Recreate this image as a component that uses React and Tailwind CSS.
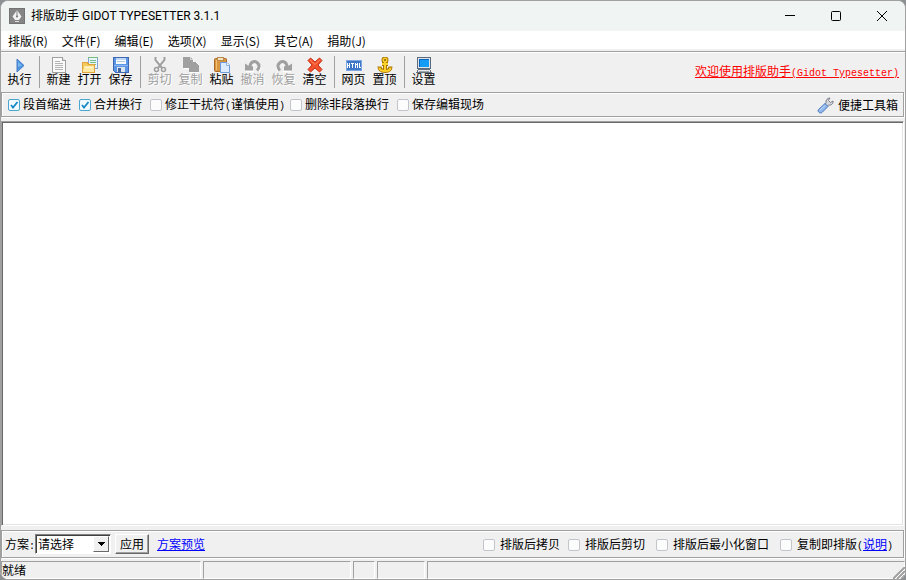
import React, { useState } from "react";

const MENUS = ["排版(R)", "文件(F)", "编辑(E)", "选项(X)", "显示(S)", "其它(A)", "捐助(J)"];

const PlayIcon = () => (
  <svg width="16" height="16" viewBox="0 0 16 16">
    <path d="M5 2L12 8.500L5 15Z" fill="#4a94e0" stroke="#4a7cc8" />
    <path d="M6 5L10 8.500L6 10Z" fill="#7ab8f2" />
  </svg>
);

const NewIcon = () => (
  <svg width="16" height="16" viewBox="0 0 16 16" shapeRendering="crispEdges">
    <path d="M1.500 0.500H11.500L14.500 3.500V15.500H1.500Z" fill="#fafafa" stroke="#a0a0a0" />
    <path d="M11.500 0.500V3.500H14.500" fill="#ddd" stroke="#a0a0a0" />
    <path d="M4 4.500H9M4 6.500H12M4 8.500H12M4 10.500H12M4 12.500H12" stroke="#b4b4b4" />
  </svg>
);

const OpenIcon = () => (
  <svg width="16" height="16" viewBox="0 0 16 16" shapeRendering="crispEdges">
    <path d="M6.500 0.500H15.500V11.500H6.500Z" fill="#e9f5fc" stroke="#7fa6d4" />
    <path d="M6 0.500H16" stroke="#73bd78" />
    <path d="M8 3.500H14M8 5.500H14M11 7.500H14" stroke="#75c08a" />
    <path d="M0.500 5.500H5.500L6.500 7.500H12.500V15.500H0.500Z" fill="#f4c95f" stroke="#dfa53c" />
    <path d="M2 9H12V15H1V12H2Z" fill="#ffe9a2" />
    <path d="M3 10.500H11" stroke="#fff7d5" />
  </svg>
);

const SaveIcon = () => (
  <svg width="16" height="16" viewBox="0 0 16 16" shapeRendering="crispEdges">
    <path d="M0.500 0.500H15.500V15.500H2.500L0.500 13.500Z" fill="#5b96e6" stroke="#3f66b3" />
    <path d="M3 1H13V7H3Z" fill="#f5faff" />
    <path d="M3 1H13V3H3Z" fill="#bfd8f7" />
    <path d="M4 4.500H12" stroke="#b9c9dd" />
    <path d="M1 8.500H15" stroke="#87b6f2" />
    <path d="M4 10H12V15H4Z" fill="#dce4ee" />
    <path d="M5 11H8V15H5Z" fill="#40649f" />
  </svg>
);

const CutIcon = () => (
  <svg width="16" height="16" viewBox="0 0 16 16" fill="none">
    <path d="M4.500 2L11 12M13.500 2L7 12" stroke="#fff" strokeWidth="2" />
    <g stroke="#9f9f9f">
      <path d="M3.500 0V3L10 11M12.500 0V3L6 11" strokeWidth="2" />
      <circle cx="4.500" cy="12.500" r="2" strokeWidth="1.500" />
      <circle cx="11.500" cy="12.500" r="2" strokeWidth="1.500" />
    </g>
  </svg>
);

const CopyIcon = () => (
  <svg width="16" height="16" viewBox="0 0 16 16" shapeRendering="crispEdges">
    <path d="M1 1H8L11 4V5H13L16 8V16H7V12H1Z" fill="#fff" />
    <path d="M0 0H7L10 3V11H0Z" fill="#a0a0a0" />
    <path d="M6 5H12L16 8V15H6Z" fill="#a0a0a0" />
    <path d="M7.500 0V2.500H10" fill="none" stroke="#d4d4d4" />
  </svg>
);

const PasteIcon = () => (
  <svg width="16" height="16" viewBox="0 0 16 16">
    <rect x="0.500" y="1.500" width="12" height="13" rx="1" fill="#d9953f" stroke="#a9692a" />
    <path d="M2.500 3V13" stroke="#f1bf72" />
    <rect x="3.500" y="0.500" width="6" height="3" fill="#f3e3c0" stroke="#b98a4c" />
    <path d="M6.500 5.500H13L15.500 8V15.500H6.500Z" fill="#dcecfc" stroke="#6d9ad9" />
    <path d="M12.500 5.500V8.500H15.500" fill="#fff" stroke="#8db4e6" />
  </svg>
);

// one arrow serves both undo and redo
const TurnIcon = ({ flip }) => (
  <svg width="16" height="16" viewBox="0 0 16 16" className={flip ? "-scale-x-100" : ""}>
    <path d="M1 14.500H9M14 14L16 9" fill="none" stroke="#fff" strokeWidth="1.500" />
    <path d="M5 10C5 5 9 3.500 12 5.500C15 8 14.500 11 12 13.500" fill="none" stroke="#a0a0a0" strokeWidth="3" />
    <path d="M0 6.500L3 8.500L8 9.500V13.500H0Z" fill="#a0a0a0" />
    <path d="M8 8.500L10.500 7.500" stroke="#fff" />
  </svg>
);

const ClearIcon = () => (
  <svg width="16" height="16" viewBox="0 0 16 16">
    <path
      d="M1 3.500L3.500 1L8 5L12.500 1L15 3.500L11 8L15 12.500L12.500 15L8 11L3.500 15L1 12.500L5 8Z"
      fill="#f2522d"
      stroke="#c32f17"
    />
    <path d="M3 3L8 7.500L12.500 3" fill="none" stroke="#ff8a63" />
  </svg>
);

const WebIcon = () => (
  <svg width="16" height="16" viewBox="0 0 16 16" shapeRendering="crispEdges">
    <rect x="0" y="3" width="16" height="11" fill="#7ba6e2" />
    <rect x="1" y="4" width="14" height="9" fill="#3f76c8" />
    <path
      d="M1 6h1v2h1v-2h1v5h-1v-2h-1v2h-1zM5 6h3v1h-1v4h-1v-4h-1zM9 6h1v1h1v-1h1v5h-1v-3h-1v3h-1zM13 6h1v4h1v1h-2z"
      fill="#fff"
    />
  </svg>
);

const AnchorIcon = () => (
  <svg width="16" height="16" viewBox="0 0 16 16" fill="none">
    <g stroke="#a87400" strokeWidth="4">
      <circle cx="8" cy="3" r="1.500" />
      <path d="M8 5V14M5 7H11M2.500 9.500C2.500 13 5 14 8 14C11 14 13.500 13 13.500 9.500" />
    </g>
    <g stroke="#fbd22b" strokeWidth="2">
      <circle cx="8" cy="3" r="1.500" />
      <path d="M8 5V14M5 7H11M2.500 10.500C2.500 13 5 14 8 14C11 14 13.500 13 13.500 10.500" />
    </g>
    <circle cx="8" cy="3" r="1" fill="#8a6210" />
  </svg>
);

const MonitorIcon = () => (
  <svg width="16" height="16" viewBox="0 0 16 16" shapeRendering="crispEdges">
    <rect x="1.500" y="0.500" width="13" height="11" fill="#dfe5ec" stroke="#5c6b7c" />
    <rect x="3" y="2" width="10" height="8" fill="#159cf4" />
    <path d="M3 2H13V3H3ZM3 2H4V10H3Z" fill="#0864b8" />
    <path d="M2.500 12.500H13.500L15.500 15.500H0.500Z" fill="#e4e8ed" stroke="#66717e" />
    <path d="M3 14H13" stroke="#9da6b1" />
  </svg>
);

const WrenchIcon = () => (
  <svg width="17" height="17" viewBox="0 0 17 17">
    <path
      d="M8 7.500L9 6C8.500 3 10.500 1 13 1L11.500 3.500L13.500 5.500L16 4C16.500 7 14 8.500 11.500 8L10 9.500Z"
      fill="#d5d8dc"
      stroke="#777d85"
    />
    <path d="M8 6.500L11 9.500L5 15.500C3 17 0 14.500 1.500 12.500Z" fill="#8db6ee" stroke="#4f78b8" />
    <path d="M3 13L8 8.500" stroke="#c7def9" />
  </svg>
);

const AppIcon = () => (
  <svg width="16" height="16" viewBox="0 0 16 16">
    <rect width="16" height="16" fill="#858585" />
    <rect x="0.500" y="0.500" width="15" height="15" fill="none" stroke="#737373" />
    <path d="M8 2L12.500 8.500L10 12H6L3.500 8.500Z" fill="#f2f2f2" />
    <path d="M8 2V8" stroke="#858585" />
    <circle cx="8" cy="8.500" r="1" fill="#707070" />
    <path d="M6 13.500H10" stroke="#ddd" />
  </svg>
);

const TOOL_GROUPS = [
  [{ label: "执行", icon: <PlayIcon /> }],
  [
    { label: "新建", icon: <NewIcon /> },
    { label: "打开", icon: <OpenIcon /> },
    { label: "保存", icon: <SaveIcon /> },
  ],
  [
    { label: "剪切", icon: <CutIcon />, disabled: true },
    { label: "复制", icon: <CopyIcon />, disabled: true },
    { label: "粘贴", icon: <PasteIcon /> },
    { label: "撤消", icon: <TurnIcon />, disabled: true },
    { label: "恢复", icon: <TurnIcon flip />, disabled: true },
    { label: "清空", icon: <ClearIcon /> },
  ],
  [
    { label: "网页", icon: <WebIcon /> },
    { label: "置顶", icon: <AnchorIcon /> },
  ],
  [{ label: "设置", icon: <MonitorIcon /> }],
];

// narrow latin glyphs, half the width of a chinese character
const Half = ({ children }) => (
  <span className="font-['Liberation_Mono',monospace] text-[10px]">{children}</span>
);

const Check = ({ id, children, defaultChecked, className = "" }) => {
  const [checked, setChecked] = useState(!!defaultChecked);

  return (
    <div className={`flex items-center whitespace-nowrap ${className}`}>
      <span className="grid">
        <input
          id={id}
          type="checkbox"
          checked={checked}
          onChange={(e) => setChecked(e.target.checked)}
          className="col-start-1 row-start-1 size-3 appearance-none rounded-xs border border-[#c3c5cc] bg-[#fcfcfc] checked:border-[#4aa5cf] checked:bg-[#f0faff]"
        />
        {checked && (
          <svg width="12" height="12" viewBox="0 0 12 12" className="pointer-events-none col-start-1 row-start-1">
            <path d="M3 6L5 8.500L9.500 3" fill="none" stroke="#1689c4" strokeWidth="1.800" />
          </svg>
        )}
      </span>
      <label htmlFor={id} className="pt-px">{children}</label>
    </div>
  );
};

const TitleBar = () => (
  <header className="flex h-[30px] shrink-0 items-center bg-[#f0f4f2] pl-2">
    <AppIcon />
    <h1 className="ml-1.5 flex-1 font-['Roboto','Noto_Sans_CJK_SC',sans-serif] text-xs">
      排版助手 GIDOT TYPESETTER 3.1.1
    </h1>
    <button aria-label="最小化" className="flex h-full w-[46px] items-center justify-center">
      <svg width="10" height="10" viewBox="0 0 10 10">
        <path d="M0 4.500H10" stroke="#000" />
      </svg>
    </button>
    <button aria-label="最大化" className="flex h-full w-[46px] items-center justify-center">
      <svg width="10" height="10" viewBox="0 0 10 10">
        <rect x="0.500" y="0.500" width="9" height="9" rx="1" fill="none" stroke="#000" />
      </svg>
    </button>
    <button aria-label="关闭" className="flex h-full w-[46px] items-center justify-center">
      <svg width="10" height="10" viewBox="0 0 10 10">
        <path d="M0 0L10 10M10 0L0 10" stroke="#000" />
      </svg>
    </button>
  </header>
);

const ToolBar = () => (
  <div className="mt-0.5 flex shrink-0 items-center justify-between border-t border-[#a0a0a0] pr-[6px] pl-[3px] shadow-[inset_0_1px_0_#fff]">
    <div className="flex h-10 items-center">
      {TOOL_GROUPS.map((group, i) => (
        <React.Fragment key={i}>
          {i > 0 && <span className="mr-[3px] ml-1 h-8 w-px bg-[#a0a0a0]" />}
          {group.map((tool) => (
            <button
              key={tool.label}
              disabled={tool.disabled}
              className="flex w-[31px] flex-col items-center leading-[14px] whitespace-nowrap disabled:text-[#a0a0a0] disabled:[text-shadow:1px_1px_0_#fff]"
            >
              {tool.icon}
              {tool.label}
            </button>
          ))}
        </React.Fragment>
      ))}
    </div>
    <a href="#welcome" className="pt-0.5 leading-[14px] text-[#ff0000] underline">
      欢迎使用排版助手<Half>(Gidot Typesetter)</Half>
    </a>
  </div>
);

const Panel = ({ children, className = "" }) => (
  <div
    className={`mr-px flex shrink-0 items-center border border-[#a0a0a0] shadow-[inset_1px_1px_0_#fff,1px_1px_0_#fff] ${className}`}
  >
    {children}
  </div>
);

const SchemeBar = () => (
  <Panel className="mt-1 h-7 justify-between pr-[10px] pl-[3px]">
    <div className="flex items-center">
      <label htmlFor="scheme" className="pt-0.5">
        方案<Half>:</Half>
      </label>
      <div className="relative h-5 w-[76px] border border-t-[#808080] border-r-white border-b-white border-l-[#808080] bg-white shadow-[inset_1px_1px_0_#404040]">
        <select id="scheme" className="h-full w-full appearance-none bg-transparent pt-0.5 pl-0.5 outline-none">
          <option>请选择</option>
        </select>
        <span className="pointer-events-none absolute top-px right-px bottom-px flex w-4 items-center justify-center border border-t-white border-r-[#696969] border-b-[#696969] border-l-white bg-[#f0f0f0]">
          <svg width="7" height="4" viewBox="0 0 7 4" shapeRendering="crispEdges">
            <path d="M0 0H7L3.500 4Z" />
          </svg>
        </span>
      </div>
      <button className="ml-1 h-5 w-[34px] border border-t-white border-r-[#696969] border-b-[#696969] border-l-white pt-0.5 shadow-[inset_-1px_-1px_0_#a0a0a0]">
        应用
      </button>
      <a href="#preview" className="ml-2 pt-0.5 text-[#0000ff] underline">
        方案预览
      </a>
    </div>
    <div className="flex items-center gap-2 pt-0.5">
      <Check id="copy-after" className="gap-[5px]">排版后拷贝</Check>
      <Check id="cut-after" className="gap-[5px] pr-[3px]">排版后剪切</Check>
      <Check id="minimize-after" className="gap-[5px] pr-[3px]">排版后最小化窗口</Check>
      <Check id="format-on-copy" className="gap-[5px]">
        复制即排版<Half>(</Half>
        <a href="#help" className="text-[#0000ff] underline">说明</a>
        <Half>)</Half>
      </Check>
    </div>
  </Panel>
);

const Pane = ({ children, className }) => (
  <div className={`border border-t-[#a0a0a0] border-r-white border-b-white border-l-[#a0a0a0] ${className}`}>
    {children}
  </div>
);

const StatusBar = () => (
  <footer className="relative mt-[3px] flex h-[18px] shrink-0 gap-0.5">
    <Pane className="w-[200px] leading-[18px]">就绪</Pane>
    <Pane className="w-[148px]" />
    <Pane className="w-[22px]" />
    <Pane className="w-12" />
    <Pane className="flex-1" />
    <svg width="12" height="12" viewBox="0 0 12 12" className="absolute right-0 bottom-0">
      <path d="M0 12L12 0M4 12L12 4M8 12L12 8" stroke="#a0a0a0" strokeWidth="2" />
      <path d="M2 12L12 2M6 12L12 6" stroke="#fff" />
    </svg>
  </footer>
);

export default function App() {
  const [text, setText] = useState("");

  return (
    <div className="h-screen bg-[#8c9093] font-['Liberation_Sans','Noto_Sans_CJK_SC',sans-serif] text-xs text-black">
      <div className="flex h-full flex-col overflow-hidden rounded-lg border border-[#a0a0a0] bg-[#f0f0f0]">
        <TitleBar />

        <nav className="flex h-[18px] shrink-0 items-center gap-[14px] bg-white pl-[7px] font-['Noto_Sans_CJK_SC',sans-serif]">
          {MENUS.map((menu) => (
            <button key={menu} className="pt-0.5 leading-[18px] whitespace-nowrap">
              {menu}
            </button>
          ))}
        </nav>

        <ToolBar />

        <Panel className="h-[25px] justify-between pr-[5px] pl-[6px]">
          <div className="flex items-center pt-px">
            <Check id="indent" defaultChecked className="gap-[3px] pr-2">段首缩进</Check>
            <Check id="merge" defaultChecked className="gap-[3px] pr-2">合并换行</Check>
            <Check id="noise" className="gap-[3px] pr-[5px]">
              修正干扰符<Half>(</Half>谨慎使用<Half>)</Half>
            </Check>
            <Check id="breaks" className="gap-[3px] pr-2">删除非段落换行</Check>
            <Check id="session" className="gap-[3px]">保存编辑现场</Check>
          </div>
          <button className="flex items-center gap-1 pt-0.5">
            <WrenchIcon />
            便捷工具箱
          </button>
        </Panel>

        <textarea
          aria-label="正文"
          value={text}
          onChange={(e) => setText(e.target.value)}
          className="mt-1 mr-px min-h-0 flex-1 resize-none border border-t-[#a0a0a0] border-r-white border-b-white border-l-[#a0a0a0] bg-white p-1 shadow-[inset_1px_1px_0_#696969,inset_-1px_-1px_0_#e3e3e3] outline-none"
        />

        <SchemeBar />
        <StatusBar />
      </div>
    </div>
  );
}
